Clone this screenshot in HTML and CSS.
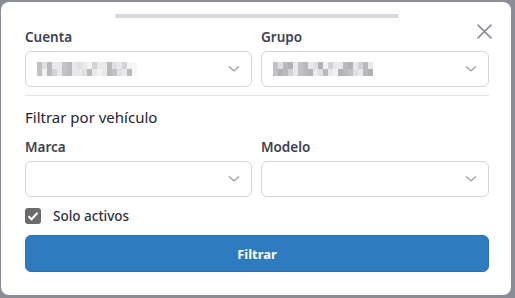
FILE: index.html
```html
<!DOCTYPE html>
<html lang="es">
<head>
<meta charset="utf-8">
<link rel="stylesheet" href="styles.css">
</head>
<body>
<div class="modal">
  <div class="handle"></div>
  <button class="close" aria-label="Cerrar">
    <svg width="14" height="14" viewBox="0 0 14 14"><path d="M1 1L13 13M13 1L1 13" stroke="#8b9099" stroke-width="1.6" stroke-linecap="round"/></svg>
  </button>
  <div class="grid first">
    <div class="field">
      <label class="label">Cuenta</label>
      <div class="select">
        <div class="mosaic m1"><i></i><i></i><i></i><i></i><i></i><i></i><i></i><i></i><i></i><i></i><i></i><i></i><i></i><i></i><i></i><i></i><i></i><i></i><i></i><i></i><i></i><i></i><i></i><i></i><i></i><i></i><i></i><i></i><i></i><i></i><i></i><i></i><i></i><i></i><i></i><i></i><i></i><i></i><i></i><i></i></div>
        <svg class="chev" width="12" height="8" viewBox="0 0 12 8"><path d="M1 1.5L6 6L11 1.5" fill="none" stroke="#9aa0a8" stroke-width="1.3"/></svg>
      </div>
    </div>
    <div class="field">
      <label class="label">Grupo</label>
      <div class="select">
        <div class="mosaic m2"><i></i><i></i><i></i><i></i><i></i><i></i><i></i><i></i><i></i><i></i><i></i><i></i><i></i><i></i><i></i><i></i><i></i><i></i><i></i><i></i><i></i><i></i><i></i><i></i><i></i><i></i><i></i><i></i><i></i><i></i><i></i><i></i><i></i><i></i><i></i><i></i><i></i><i></i><i></i><i></i></div>
        <svg class="chev" width="12" height="8" viewBox="0 0 12 8"><path d="M1 1.5L6 6L11 1.5" fill="none" stroke="#9aa0a8" stroke-width="1.3"/></svg>
      </div>
    </div>
  </div>
  <hr class="divider">
  <div class="section">Filtrar por vehículo</div>
  <div class="grid">
    <div class="field">
      <label class="label">Marca</label>
      <div class="select">
        <svg class="chev" width="12" height="8" viewBox="0 0 12 8"><path d="M1 1.5L6 6L11 1.5" fill="none" stroke="#9aa0a8" stroke-width="1.3"/></svg>
      </div>
    </div>
    <div class="field">
      <label class="label">Modelo</label>
      <div class="select">
        <svg class="chev" width="12" height="8" viewBox="0 0 12 8"><path d="M1 1.5L6 6L11 1.5" fill="none" stroke="#9aa0a8" stroke-width="1.3"/></svg>
      </div>
    </div>
  </div>
  <label class="check">
    <span class="box"><svg width="12" height="10" viewBox="0 0 12 10"><path d="M1.5 5.2L4.6 8.2L10.5 1.8" fill="none" stroke="#fff" stroke-width="2"/></svg></span>
    <span class="check-text">Solo activos</span>
  </label>
  <button class="btn">Filtrar</button>
</div>
</body>
</html>
```
FILE: styles.css
```css
* { box-sizing: border-box; }
html, body { margin: 0; padding: 0; }
body {
  width: 515px;
  height: 298px;
  background: #8a8d96;
  overflow: hidden;
  font-family: "Noto Sans", "Open Sans", sans-serif;
  padding: 2px 0 0 1px;
}
.modal {
  position: relative;
  width: 510px;
  height: 293px;
  background: #fff;
  border-radius: 8px;
  padding: 12px 22px 0 24px;
  display: flex;
  flex-direction: column;
}
.handle {
  width: 284px;
  height: 4px;
  border-radius: 2px;
  background: #d7d9dc;
  margin: 0 0 0 90px;
}
.close {
  position: absolute;
  top: 22px;
  right: 19px;
  width: 15px;
  height: 15px;
  padding: 0;
  border: 0;
  background: none;
  display: flex;
}
.close svg { width: 15px; height: 15px; }
.grid {
  display: grid;
  grid-template-columns: 227px 228px;
  column-gap: 9px;
}
.grid.first { margin-top: 10px; }
.field { display: flex; flex-direction: column; }
.label {
  font-size: 13.5px;
  font-weight: 600;
  color: #3b4250;
  line-height: 18px;
  margin-bottom: 5px;
}
.select {
  height: 36px;
  border: 1px solid #d3d6db;
  border-radius: 6px;
  display: flex;
  align-items: center;
  padding: 0 11px 0 11px;
  justify-content: space-between;
}
.select .chev { margin-left: auto; }
.mosaic {
  display: grid;
  grid-template-columns: repeat(20, 5px);
  grid-template-rows: 7px 7px;
  opacity: 0.8;
}
.mosaic i { display: block; background: #e4e4e6; }
.mosaic i:nth-child(3n) { background: #c8c9cc; }
.mosaic i:nth-child(5n+1) { background: #b3b4b8; }
.mosaic i:nth-child(7n+2) { background: #d8d9db; }
.mosaic i:nth-child(4n+3) { background: #a8a9ad; }
.mosaic i:nth-child(11n) { background: #f0f0f1; }
.m1 i:nth-child(20n) { background: #f7f7f8; }
.m1 i:nth-child(40n+19) { background: #f2f2f3; }
.m2 i:nth-child(6n+4) { background: #9fa0a4; }
.divider {
  border: 0;
  border-top: 1px solid #e3e5e8;
  margin: 8px 0 0 0;
  width: 464px;
}
.section {
  font-size: 15px;
  color: #1f2530;
  line-height: 20px;
  margin: 11px 0 11px;
}
.check {
  display: flex;
  align-items: center;
  margin-top: 10px;
}
.box {
  width: 16px;
  height: 16px;
  border-radius: 3px;
  background: #6b6b6b;
  display: flex;
  align-items: center;
  justify-content: center;
}
.check-text {
  margin-left: 12px;
  font-size: 13.5px;
  font-weight: 500;
  color: #2b3240;
}
.btn {
  margin-top: 10px;
  width: 464px;
  height: 37px;
  background: #2f7bc0;
  border: 1px solid #2a72b5;
  border-radius: 6px;
  color: #fff;
  font-family: inherit;
  font-size: 13px;
  font-weight: 700;
}
```
